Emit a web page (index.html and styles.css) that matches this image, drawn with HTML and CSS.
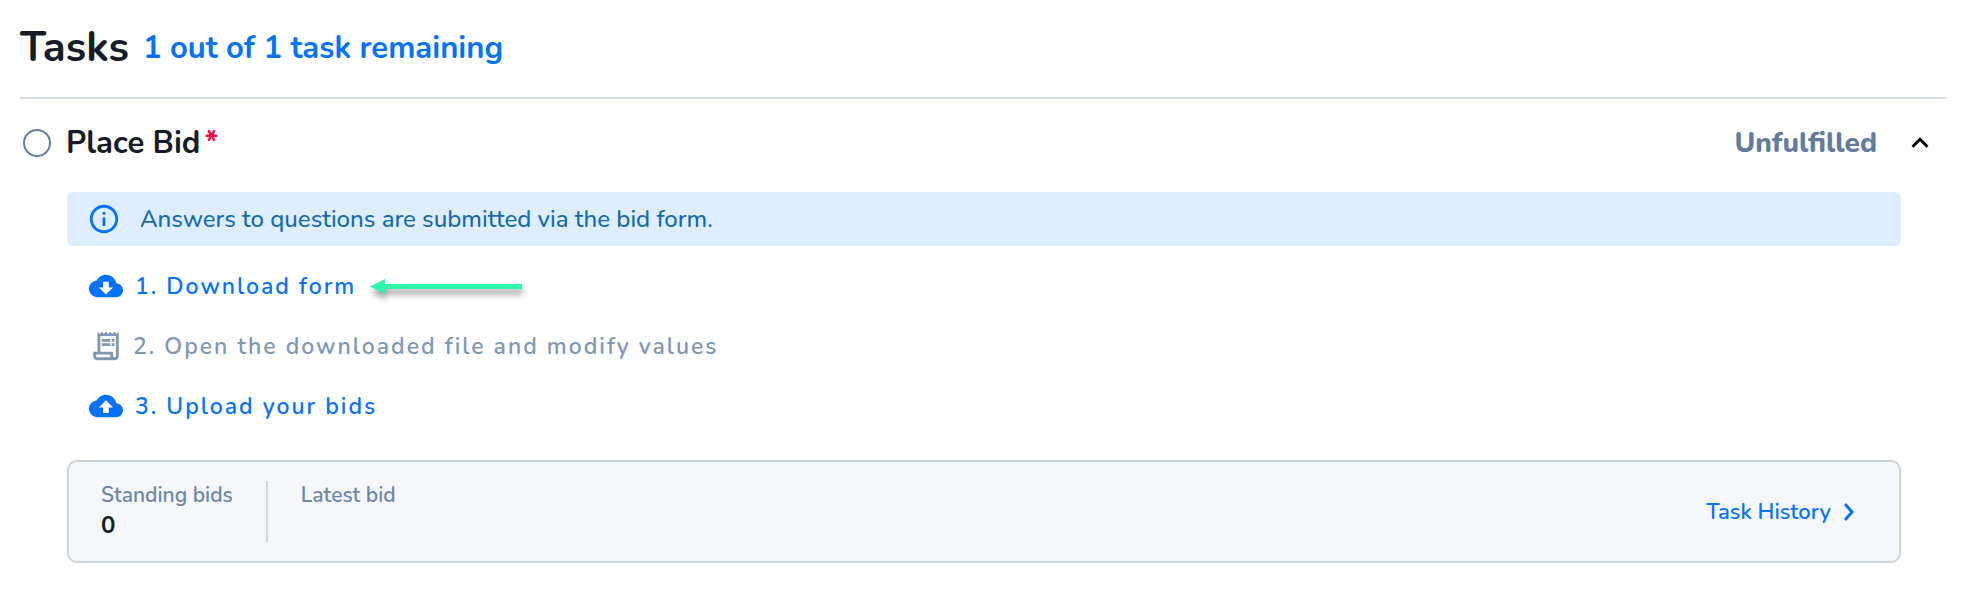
FILE: index.html
```html
<!DOCTYPE html>
<html lang="en">
<head>
<meta charset="utf-8">
<title>Tasks</title>
<link rel="stylesheet" href="styles.css">
</head>
<body>
<main class="tasks">
  <header class="tasks-header">
    <h1 class="title">Tasks</h1>
    <p class="remaining">1 out of 1 task remaining</p>
  </header>

  <section class="task">
    <div class="task-head">
      <svg class="status-icon" viewBox="0 0 34 34" aria-hidden="true"><circle cx="17" cy="17" r="13" fill="none" stroke="currentColor" stroke-width="2"/></svg>
      <h2 class="task-name">Place Bid<span class="required">*</span></h2>
      <span class="task-state">Unfulfilled</span>
      <button class="toggle" type="button" aria-label="Collapse" aria-expanded="true">
        <svg class="icon" viewBox="0 0 24 24" aria-hidden="true"><path fill="currentColor" d="M12 8l-6 6 1.41 1.41L12 10.830l4.590 4.580L18 14z"/></svg>
      </button>
    </div>

    <div class="task-body">
      <div class="notice">
        <svg class="icon" viewBox="0 0 24 24" aria-hidden="true"><path fill="currentColor" d="M11 7h2v2h-2zm0 4h2v6h-2zm1-9C6.480 2 2 6.480 2 12s4.480 10 10 10 10-4.480 10-10S17.520 2 12 2zm0 18c-4.410 0-8-3.590-8-8s3.590-8 8-8 8 3.590 8 8-3.590 8-8 8z"/></svg>
        <p class="notice-text">Answers to questions are submitted via the bid form.</p>
      </div>

      <div class="steps">
        <div class="step">
          <button class="step-action" type="button">
            <svg class="icon" viewBox="0 0 24 24" aria-hidden="true"><path fill="currentColor" d="M19.350 10.040C18.670 6.590 15.640 4 12 4 9.110 4 6.600 5.640 5.350 8.040 2.340 8.360 0 10.910 0 14c0 3.310 2.690 6 6 6h13c2.760 0 5-2.240 5-5 0-2.640-2.050-4.780-4.650-4.960zM17 13l-5 5-5-5h3V9h4v4h3z"/></svg>
            <span>1. Download form</span>
          </button>
          <svg class="arrow" viewBox="0 0 152 15" aria-hidden="true"><path fill="currentColor" d="M0 7.500L15 0v5h137v5H15v5z"/></svg>
        </div>
        <div class="step step-note">
          <svg class="icon" viewBox="0 0 24 24" aria-hidden="true"><path fill="currentColor" d="M19.500 3.500L18 2l-1.500 1.500L15 2l-1.500 1.500L12 2l-1.500 1.500L9 2 7.500 3.500 6 2v14H3v3c0 1.660 1.340 3 3 3h12c1.660 0 3-1.340 3-3V2l-1.500 1.500zM15 20H6c-.550 0-1-.450-1-1v-1h10v2zm4-1c0 .550-.450 1-1 1s-1-.450-1-1v-3H8V5h11v14zM9 7h6v2H9zM16 7h2v2h-2zM9 10h6v2H9zM16 10h2v2h-2z"/></svg>
          <span>2. Open the downloaded file and modify values</span>
        </div>
        <div class="step">
          <button class="step-action" type="button">
            <svg class="icon" viewBox="0 0 24 24" aria-hidden="true"><path fill="currentColor" d="M19.350 10.040C18.670 6.590 15.640 4 12 4 9.110 4 6.600 5.640 5.350 8.040 2.340 8.360 0 10.910 0 14c0 3.310 2.690 6 6 6h13c2.760 0 5-2.240 5-5 0-2.640-2.050-4.780-4.650-4.960zM14 13v4h-4v-4H7l5-5 5 5h-3z"/></svg>
            <span>3. Upload your bids</span>
          </button>
        </div>
      </div>

      <div class="summary">
        <dl class="stats">
          <div class="stat"><dt>Standing bids</dt><dd>0</dd></div>
          <div class="stat"><dt>Latest bid</dt><dd></dd></div>
        </dl>
        <a class="history" href="#history">Task History
          <svg class="history-icon" viewBox="0 0 24 24" aria-hidden="true"><path fill="none" stroke="currentColor" stroke-width="3" d="M8 4l7 8-7 8"/></svg>
        </a>
      </div>
    </div>
  </section>
</main>
</body>
</html>
```

FILE: styles.css
```css
body {
  margin: 0;
  background: #fff;
  color: #161b26;
  font-family: Nunito, "Open Sans", "Noto Sans", sans-serif;
  font-size: 23px;
}

h1, h2, p, dl, dt, dd { margin: 0; }

button {
  padding: 0;
  border: 0;
  background: none;
  font: inherit;
  letter-spacing: inherit;
  color: inherit;
  cursor: pointer;
}

.tasks { padding: 0 15px 0 20px; }

.tasks-header {
  display: flex;
  align-items: center;
  gap: 14px;
  height: 95px;
  padding-bottom: 2px;
  border-bottom: 2px solid #d9e2eb;
}

.title { font-size: 42px; font-weight: 700; line-height: 48px; }
.remaining { font-size: 31px; font-weight: 700; line-height: 40px; color: #0672fb; }

.task-head {
  display: flex;
  align-items: center;
  height: 88px;
  padding-right: 10px;
}

.icon, .status-icon { display: block; flex: none; width: 34px; height: 34px; }
.status-icon { margin-right: 12px; color: #6480a0; }

.task-name { flex: 1; font-size: 31px; font-weight: 700; line-height: 40px; }
.required { margin-left: 4px; color: #ee0a4e; }
.task-state { font-size: 28px; font-weight: 800; line-height: 40px; color: #647c9c; }
.toggle { margin-left: 26px; color: #000; }

.task-body { padding: 5px 46px 0 47px; }

.notice {
  display: flex;
  align-items: center;
  gap: 19px;
  min-height: 54px;
  padding: 0 20px;
  border-radius: 6px;
  background: #deeeff;
  color: #0672fb;
}
.notice-text { font-size: 24px; font-weight: 500; line-height: 32px; color: #146bab; }

.steps { padding: 10px 22px 24px; letter-spacing: 2px; font-weight: 600; }
.step { display: flex; align-items: center; gap: 14px; height: 60px; color: #0672fb; }
.step-action { display: flex; align-items: center; gap: 12px; }
.step-note { gap: 10px; color: #8097b1; }
.arrow {
  width: 152px;
  height: 15px;
  overflow: visible;
  color: #2ff5ac;
  filter: drop-shadow(1px 5px 3px rgba(0, 0, 0, 0.4));
}

.summary {
  display: flex;
  align-items: center;
  justify-content: space-between;
  padding: 19px 38px 19px 32px;
  border: 2px solid #cbd6e1;
  border-radius: 10px;
  background: #f5f7fb;
}
.stats { display: flex; }
.stat { min-height: 61px; padding-right: 33px; }
.stat + .stat { padding-left: 33px; border-left: 2px solid #cbd6e1; }
.stat dt { font-size: 21px; font-weight: 600; line-height: 29px; color: #7188a5; }
.stat dd { font-size: 24px; font-weight: 700; line-height: 30px; }

.history {
  display: flex;
  align-items: center;
  gap: 6px;
  font-size: 22px;
  font-weight: 600;
  color: #0672fb;
  text-decoration: none;
}
.history-icon { width: 24px; height: 24px; }
```
